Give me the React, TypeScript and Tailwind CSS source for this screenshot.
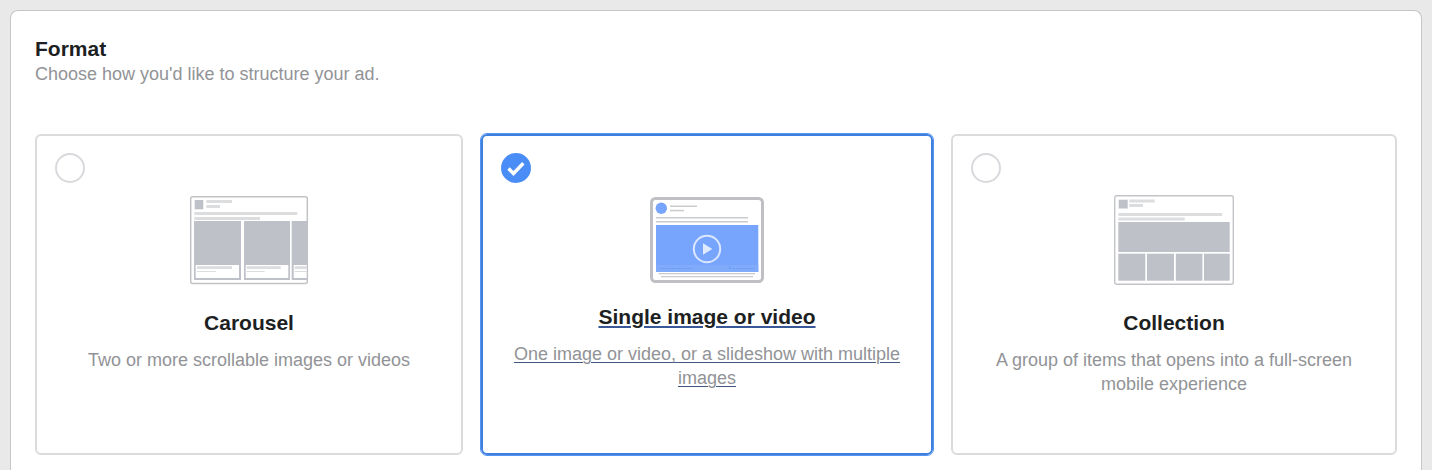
import { useState } from "react"
import type { ReactNode } from "react"
import clsx from "clsx"

type Format = {
  id: string
  title: string
  description: string
  art: ReactNode
}

const CarouselArt = () => {
  return (
    <svg width="120" height="90" viewBox="0 0 120 90" fill="none" aria-hidden="true" className="mb-[26px]">
      <rect x="1.7" y="1.7" width="116.6" height="86.8" rx="2" fill="#fff" stroke="#c2c3c7" strokeWidth="1.5" />
      <rect x="5.7" y="5" width="8.6" height="9.3" fill="#bec1c8" />
      <g fill="#dcdddf">
        <rect x="17.3" y="5" width="25.7" height="3" />
        <rect x="17.3" y="10" width="13.7" height="3" />
        <rect x="5.3" y="17" width="103" height="3" />
        <rect x="5.3" y="22" width="65.7" height="3" />
      </g>
      <g fill="#bec1c8">
        <rect x="5" y="26" width="47" height="59" />
        <rect x="55" y="26" width="46" height="59" />
        <rect x="102.7" y="26" width="16" height="59" />
      </g>
      <g fill="#fff">
        <rect x="6.7" y="70" width="43.3" height="13" />
        <rect x="56.7" y="70" width="42.6" height="13" />
        <rect x="104.7" y="70" width="13" height="13" />
      </g>
      <g fill="#dcdddf">
        <rect x="8" y="71.2" width="35" height="2.8" />
        <rect x="57.7" y="71.2" width="34" height="2.8" />
        <rect x="105.7" y="71.2" width="12" height="2.8" />
        <rect x="8" y="76" width="18.7" height="1" />
        <rect x="57.7" y="76" width="18" height="1" />
        <rect x="105.7" y="76" width="12" height="1" />
      </g>
    </svg>
  )
}

const SingleArt = () => {
  return (
    <svg width="114" height="86" viewBox="0 0 114 86" fill="none" aria-hidden="true" className="mt-[2px] mb-[22px]">
      <rect x="1.5" y="1.5" width="111" height="83" rx="4" fill="#fff" stroke="#bfc0c4" strokeWidth="3" />
      <circle cx="11.3" cy="11.3" r="5.7" fill="#77a5fd" />
      <g fill="#cacbce">
        <rect x="20" y="8.5" width="27" height="1.5" />
        <rect x="20" y="12.8" width="14" height="1.5" />
        <rect x="6" y="20" width="92" height="1.5" />
        <rect x="6" y="24" width="92" height="1.5" />
        <rect x="8.5" y="76" width="96.5" height="1.3" />
        <rect x="11" y="79" width="92" height="1.3" />
      </g>
      <rect x="6" y="28" width="102.3" height="47" fill="#77a5fd" />
      <rect x="6" y="68" width="102.3" height="7" fill="#80abfb" />
      <path d="M10 71.5h32M79.5 71.5H105" stroke="#6d9bf2" strokeWidth="1" strokeDasharray="2 1" />
      <path d="M79.5 69v3" stroke="#6d9bf2" />
      <circle cx="57" cy="52" r="13.2" stroke="#dbe7fe" strokeWidth="2" />
      <path d="M53 46.3v11.4l9.3-5.7z" fill="#e0eafe" />
    </svg>
  )
}

const CollectionArt = () => {
  return (
    <svg width="120" height="90" viewBox="0 0 120 90" fill="none" aria-hidden="true" className="mb-[26px]">
      <rect x="0.7" y="0.7" width="118.6" height="88.6" rx="2" fill="#fff" stroke="#c2c4c8" strokeWidth="1.4" />
      <rect x="4.7" y="4.7" width="9" height="8.8" fill="#bec1c8" />
      <g fill="#dcdddf">
        <rect x="15.3" y="4.5" width="25.4" height="3" />
        <rect x="15.3" y="9" width="13.7" height="3" />
        <rect x="4.3" y="18" width="103.7" height="3" />
        <rect x="4.3" y="22.5" width="66.4" height="3" />
      </g>
      <g fill="#bec1c8">
        <rect x="4.3" y="27" width="111.4" height="30" />
        <rect x="4.3" y="58.7" width="27" height="27" />
        <rect x="33" y="58.7" width="27" height="27" />
        <rect x="61.8" y="58.7" width="26.6" height="27" />
        <rect x="90" y="58.7" width="25.7" height="27" />
      </g>
    </svg>
  )
}

const formats: Format[] = [
  {
    id: "carousel",
    title: "Carousel",
    description: "Two or more scrollable images or videos",
    art: <CarouselArt />,
  },
  {
    id: "single",
    title: "Single image or video",
    description: "One image or video, or a slideshow with multiple images",
    art: <SingleArt />,
  },
  {
    id: "collection",
    title: "Collection",
    description: "A group of items that opens into a full-screen mobile experience",
    art: <CollectionArt />,
  },
]

function FormatCard({
  format,
  selected,
  onSelect,
}: {
  format: Format
  selected: boolean
  onSelect: () => void
}) {
  return (
    <label
      className={clsx(
        "relative flex min-h-[321px] cursor-pointer flex-col items-center rounded-md border-2 px-6 pt-[59px] pb-6 text-center",
        selected ? "border-[#3d80de] outline-1 outline-[#5596f2]" : "border-[#dadbdd]"
      )}
    >
      <span className="absolute top-[17px] left-[18px] grid size-[30px] place-items-center">
        <input
          type="radio"
          name="format"
          value={format.id}
          checked={selected}
          onChange={onSelect}
          className="col-start-1 row-start-1 size-[30px] cursor-pointer appearance-none rounded-full border-2 border-[#d8d9dc] bg-white checked:border-[#4a8df6] checked:bg-[#4a8df6]"
        />
        {selected && (
          <svg
            width="30"
            height="30"
            viewBox="0 0 30 30"
            fill="none"
            aria-hidden="true"
            className="pointer-events-none col-start-1 row-start-1"
          >
            <path d="M7.5 15.5l5 5L22.3 10.3" stroke="#fff" strokeWidth="3.4" />
          </svg>
        )}
      </span>
      {format.art}
      <span
        className={clsx(
          "text-[21px] leading-[23px] font-bold text-[#1d1f23]",
          selected && "underline decoration-[#385898] decoration-2 underline-offset-2"
        )}
      >
        {format.title}
      </span>
      <span
        className={clsx(
          "mt-[14px] text-[18px] leading-6 text-[#929397]",
          selected && "underline decoration-[#44597f] decoration-1 underline-offset-2"
        )}
      >
        {format.description}
      </span>
    </label>
  )
}

export default function App() {
  const [active, setActive] = useState("single")

  return (
    <div className="flex min-h-screen flex-col bg-[#e9e9ea] px-[10px] pt-[10px] font-['Liberation_Sans',Arial,sans-serif]">
      <main className="flex-1 rounded-t-lg border border-b-0 border-[#c6c6c8] bg-white px-6 pt-[26px] pb-[15px]">
        <h2 className="mb-[2px] text-[21px] leading-[23px] font-bold text-[#1d1f23]">Format</h2>
        <p className="text-[18px] leading-6 text-[#929397]">Choose how you'd like to structure your ad.</p>
        <div
          role="radiogroup"
          aria-label="Format"
          className="mt-12 grid grid-cols-[428fr_452fr_446fr] gap-[18px]"
        >
          {formats.map((format) => (
            <FormatCard
              key={format.id}
              format={format}
              selected={active === format.id}
              onSelect={() => setActive(format.id)}
            />
          ))}
        </div>
      </main>
    </div>
  )
}
